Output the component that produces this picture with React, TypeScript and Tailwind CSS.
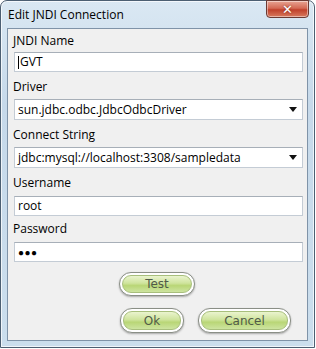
import React from "react";

const fields = [
  { label: "JNDI Name", value: "GVT", kind: "text", caret: true, gap: "mt-[4px]", box: "mt-[3px] h-[20px]" },
  { label: "Driver", value: "sun.jdbc.odbc.JdbcOdbcDriver", kind: "select", gap: "mt-[7px]", box: "mt-[4px] h-[21px]" },
  { label: "Connect String", value: "jdbc:mysql://localhost:3308/sampledata", kind: "select", gap: "mt-[7px]", box: "mt-[4px] h-[21px]" },
  { label: "Username", value: "root", kind: "text", gap: "mt-[7px]", box: "mt-[5px] h-[20px]" },
  { label: "Password", value: "●●●", kind: "password", gap: "mt-[5px]", box: "mt-[5px] h-[20px]" },
];

const GlassButton = ({ label, className }: { label: string; className?: string }) => (
  <div
    className={`rounded-[12px] border border-[#8a8f86] bg-white p-[2px] shadow-[0_1px_2px_rgba(0,0,0,0.3)] ${className ?? ""}`}
  >
    <div className="flex h-full items-center justify-center rounded-[9px] border border-[#a8bf7c] bg-[linear-gradient(to_bottom,#eaf4cf_0%,#cfe49d_45%,#b9d676_60%,#cde4a0_100%)] text-[12px] text-[#505a48] [font-family:'DejaVu_Sans',sans-serif]">
      {label}
    </div>
  </div>
);

export default function App() {
  return (
    <div className="h-[349px] w-[316px] bg-white [font-family:'Open_Sans',sans-serif]">
      <div className="relative flex h-[348px] w-[315px] flex-col rounded-t-[7px] border border-[#4c5f72] bg-[linear-gradient(to_bottom,#dae8f3_0%,#c6d9ea_30%,#cbdeed_100%)] shadow-[inset_0_0_0_1px_rgba(255,255,255,0.7)]">
        {/* title bar */}
        <div className="flex h-[27px] items-center pl-[7px] text-[12px] text-black">
          Edit JNDI Connection
        </div>
        <div className="absolute right-[5px] top-[-1px] flex h-[18px] w-[43px] items-center justify-center rounded-b-[4px] border border-[#6b3a33] bg-[linear-gradient(to_bottom,#e8a493_0%,#d46a55_45%,#c0412b_55%,#d87a5e_100%)] shadow-[inset_0_0_0_1px_rgba(255,255,255,0.45)]">
          <span className="text-[13px] font-bold leading-none text-white [font-family:'DejaVu_Sans',sans-serif] [text-shadow:0_0_2px_#7a2a1a]">
            ✕
          </span>
        </div>

        {/* client area */}
        <div className="mx-[6px] mb-[6px] flex flex-1 flex-col border border-[#7f93a8] bg-[#f0f0f0] pl-[5px] pr-[4px] text-[12px] text-black">
          {fields.map((f) => (
            <div key={f.label} className={f.gap}>
              <div className="h-[16px] leading-[16px]">{f.label}</div>
              <div
                className={`${f.box} ml-[1px] flex items-center border border-[#c4ccd5] border-t-[#a7afb8] bg-white pl-[3px] pr-[5px]`}
              >
                {f.caret && <span className="mr-[1px] h-[13px] w-[1px] bg-black" />}
                <span
                  className={
                    f.kind === "password"
                      ? "text-[10px] leading-none tracking-[0.5px]"
                      : "leading-none"
                  }
                >
                  {f.value}
                </span>
                {f.kind === "select" && (
                  <svg className="ml-auto" width="8" height="5" viewBox="0 0 8 5">
                    <polygon points="0,0 8,0 4,5" fill="#111" />
                  </svg>
                )}
              </div>
            </div>
          ))}

          <div className="mt-[10px] flex pl-[106px]">
            <GlassButton label="Test" className="h-[24px] w-[76px]" />
          </div>
          <div className="mt-[12px] flex gap-[14px] pl-[107px]">
            <GlassButton label="Ok" className="h-[25px] w-[64px]" />
            <GlassButton label="Cancel" className="h-[25px] w-[93px]" />
          </div>
        </div>
      </div>
    </div>
  );
}
